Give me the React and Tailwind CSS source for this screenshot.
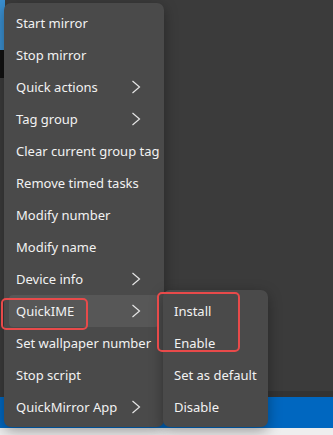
import React from "react";

const menuItems = [
  { label: "Start mirror" },
  { label: "Stop mirror" },
  { label: "Quick actions", sub: true },
  { label: "Tag group", sub: true },
  { label: "Clear current group tag" },
  { label: "Remove timed tasks" },
  { label: "Modify number" },
  { label: "Modify name" },
  { label: "Device info", sub: true },
  { label: "QuickIME", sub: true, active: true },
  { label: "Set wallpaper number" },
  { label: "Stop script" },
  { label: "QuickMirror App", sub: true }
];

const subItems = ["Install", "Enable", "Set as default", "Disable"];

function Chevron() {
  return (
    <svg width="10" height="14" viewBox="0 0 10 14" className="shrink-0">
      <polyline
        points="1.5,1 8.5,7 1.5,13"
        fill="none"
        stroke="#e6e6e6"
        strokeWidth="1.2"
      />
    </svg>
  );
}

export default function App() {
  return (
    <div
      className="relative w-[333px] h-[435px] overflow-hidden bg-[#3b3b3b] text-[13px] text-[#f2f2f2]"
      style={{ fontFamily: '"Noto Sans", sans-serif' }}>
      {/* Background window */}
      <div className="flex flex-col h-full">
        <div className="flex flex-1">
          <div className="flex flex-col w-[5px]">
            <div className="h-[50px] bg-[#3a8fd0]" />
            <div className="h-[28px] bg-[#111111]" />
            <div className="flex-1" />
          </div>
          <div className="flex-1 flex flex-col">
            <div className="flex-1" />
            <div className="h-[6px] bg-[#333333]" />
          </div>
        </div>
        <div className="h-[31px] bg-[#0067c0]" />
        <div className="h-[7px] bg-[#eeeeee]" />
      </div>

      {/* Context menu */}
      <div className="absolute left-[4px] top-[3px] w-[160px] rounded-[7px] bg-[#4a4a4a] pt-[4px] pb-[4px] shadow-[0_4px_14px_rgba(0,0,0,0.35)]">
        {menuItems.map((m) => (
          <div
            key={m.label}
            className={`mx-[5px] h-[32px] pl-[7px] pr-[18px] rounded-[4px] flex items-center whitespace-nowrap ${
              m.active ? "bg-[#575757]" : ""
            }`}>
            <span className="flex-1 leading-none pt-[1px]">{m.label}</span>
            {m.sub && <Chevron />}
          </div>
        ))}
      </div>

      {/* Submenu */}
      <div className="absolute left-[163px] top-[290px] w-[105px] rounded-[7px] bg-[#4a4a4a] pt-[5px] pb-[4px] shadow-[0_4px_14px_rgba(0,0,0,0.35)]">
        {subItems.map((s) => (
          <div
            key={s}
            className="mx-[5px] h-[32px] px-[6px] rounded-[4px] flex items-center whitespace-nowrap">
            <span className="leading-none pt-[1px]">{s}</span>
          </div>
        ))}
      </div>

      {/* Annotation boxes */}
      <div className="absolute left-[1px] top-[298px] w-[87px] h-[32px] rounded-[5px] border-2 border-[#e84a4a]" />
      <div className="absolute left-[157px] top-[292px] w-[83px] h-[60px] rounded-[5px] border-2 border-[#e84a4a]" />
    </div>
  );
}
